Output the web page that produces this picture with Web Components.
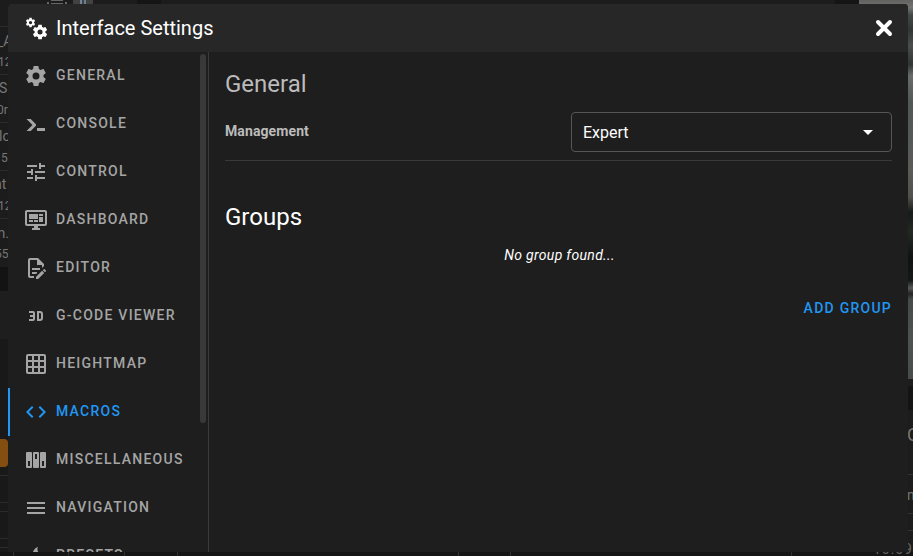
<!DOCTYPE html>
<html lang="en"><head><meta charset="utf-8"><title>Interface Settings</title>
<style>
html,body{margin:0;height:100%;overflow:hidden;background:#191919}
body{font-family:Roboto,sans-serif;color:#fff}
</style></head><body>
<app-stage>
<page-backdrop slot="back"></page-backdrop>
<settings-dialog heading="Interface Settings">
<settings-nav slot="nav">
<nav-item icon="cog">General</nav-item>
<nav-item icon="console">Console</nav-item>
<nav-item icon="tune">Control</nav-item>
<nav-item icon="dashboard">Dashboard</nav-item>
<nav-item icon="edit">Editor</nav-item>
<nav-item icon="threed">G-Code Viewer</nav-item>
<nav-item icon="grid">Heightmap</nav-item>
<nav-item icon="code" active>Macros</nav-item>
<nav-item icon="dip">Miscellaneous</nav-item>
<nav-item icon="menu">Navigation</nav-item>
<nav-item icon="fire">Presets</nav-item>
</settings-nav>
<macros-panel></macros-panel>
</settings-dialog>
</app-stage>
<script>
const ICONS={
cog:'<path d="M12,15.5A3.5,3.5 0 0,1 8.5,12A3.5,3.5 0 0,1 12,8.5A3.5,3.5 0 0,1 15.5,12A3.5,3.5 0 0,1 12,15.5M19.43,12.97C19.47,12.65 19.5,12.33 19.5,12C19.5,11.67 19.47,11.34 19.43,11L21.54,9.37C21.73,9.22 21.78,8.95 21.66,8.73L19.66,5.27C19.54,5.05 19.27,4.96 19.05,5.05L16.56,6.05C16.04,5.66 15.5,5.32 14.87,5.07L14.5,2.42C14.46,2.18 14.25,2 14,2H10C9.75,2 9.54,2.18 9.5,2.42L9.13,5.07C8.5,5.32 7.96,5.66 7.44,6.05L4.95,5.05C4.73,4.96 4.46,5.05 4.34,5.27L2.34,8.73C2.21,8.95 2.27,9.22 2.46,9.37L4.57,11C4.53,11.34 4.5,11.67 4.5,12C4.5,12.33 4.53,12.65 4.57,12.97L2.46,14.63C2.27,14.78 2.21,15.05 2.34,15.27L4.34,18.73C4.46,18.95 4.73,19.03 4.95,18.95L7.44,17.94C7.96,18.34 8.5,18.68 9.13,18.93L9.5,21.58C9.54,21.82 9.75,22 10,22H14C14.25,22 14.46,21.82 14.5,21.58L14.87,18.93C15.5,18.67 16.04,18.34 16.56,17.94L19.05,18.95C19.27,19.03 19.54,18.95 19.66,18.73L21.66,15.27C21.78,15.05 21.73,14.78 21.54,14.63L19.43,12.97Z"/>',
console:'<path d="M13,19V16H21V19H13M8.5,13L2.47,7H6.71L11.67,11.95C12.25,12.54 12.25,13.5 11.67,14.07L6.74,19H2.5L8.5,13Z"/>',
tune:'<path d="M3,17V19H9V17H3M3,5V7H13V5H3M13,21V19H21V17H13V15H11V21H13M7,9V11H3V13H7V15H9V9H7M21,13V11H11V13H21M15,9H17V7H21V5H17V3H15V9Z"/>',
dashboard:'<path d="M21,16V4H3V16H21M21,2A2,2 0 0,1 23,4V16A2,2 0 0,1 21,18H14V20H16V22H8V20H10V18H3C1.89,18 1,17.1 1,16V4C1,2.89 1.89,2 3,2H21M5,6H14V11H5V6M15,6H19V8H15V6M19,9V14H15V9H19M5,12H9V14H5V12M10,12H14V14H10V12Z"/>',
edit:'<path d="M8,12H16V14H8V12M10,20H6V4H13V9H18V12.1L20,10.1V8L14,2H6A2,2 0 0,0 4,4V20A2,2 0 0,0 6,22H10V20M8,18H12.1L13,17.1V16H8V18M20.2,13C20.3,13 20.5,13.1 20.6,13.2L21.9,14.5C22.1,14.7 22.1,15.1 21.9,15.3L20.9,16.3L18.8,14.2L19.8,13.2C19.9,13.1 20,13 20.2,13M20.2,16.9L14.1,23H12V20.9L18.1,14.8L20.2,16.9Z"/>',
threed:'<path d="M5,7H9A2,2 0 0,1 11,9V15A2,2 0 0,1 9,17H5V15H9V13H6V11H9V9H5V7M13,7H16A3,3 0 0,1 19,10V14A3,3 0 0,1 16,17H13V7M15,9V15H16A1,1 0 0,0 17,14V10A1,1 0 0,0 16,9H15Z"/>',
grid:'<path d="M10,4V8H14V4H10M16,4V8H20V4H16M16,10V14H20V10H16M16,16V20H20V16H16M14,20V16H10V20H14M8,20V16H4V20H8M8,14V10H4V14H8M8,8V4H4V8H8M10,14H14V10H10V14M4,2H20A2,2 0 0,1 22,4V20A2,2 0 0,1 20,22H4C2.92,22 2,21.1 2,20V4A2,2 0 0,1 4,2Z"/>',
code:'<path d="M14.6,16.6L19.2,12L14.6,7.4L16,6L22,12L16,18L14.6,16.6M9.4,16.6L4.8,12L9.4,7.4L8,6L2,12L8,18L9.4,16.6Z"/>',
dip:'<path fill-rule="evenodd" d="M3 4H7A1 1 0 0 1 8 5V19A1 1 0 0 1 7 20H3A1 1 0 0 1 2 19V5A1 1 0 0 1 3 4M4 13V18H6V13ZM10 4H14A1 1 0 0 1 15 5V19A1 1 0 0 1 14 20H10A1 1 0 0 1 9 19V5A1 1 0 0 1 10 4M11 6V11H13V6ZM17 4H21A1 1 0 0 1 22 5V19A1 1 0 0 1 21 20H17A1 1 0 0 1 16 19V5A1 1 0 0 1 17 4M18 13V18H20V13Z"/>',
menu:'<path d="M3,6H21V8H3V6M3,11H21V13H3V11M3,16H21V18H3V16Z"/>',
fire:'<path d="M17.66 11.2C17.43 10.9 17.15 10.64 16.89 10.38C16.22 9.78 15.46 9.35 14.82 8.72C13.33 7.26 13 4.85 13.95 3C13 3.23 12.17 3.75 11.46 4.32C8.87 6.4 7.85 10.07 9.07 13.22C7 13 6 11 6 10C4 14 6 21 12 21S20 15 17.66 11.2Z"/>',
close:'<path d="M6 6L18 18M18 6L6 18" fill="none" stroke="currentColor" stroke-width="4" stroke-linecap="round"/>',
caret:'<path d="M7 10L12 15L17 10Z"/>'
};
ICONS.cogs='<g transform="translate(.9 .9) scale(.47)">'+ICONS.cog+'</g><g transform="translate(7.4 7.4) scale(.72)">'+ICONS.cog+'</g>';
const define=(name,render)=>customElements.define(name,class extends HTMLElement{
constructor(){super();this.attachShadow({mode:'open'})}
connectedCallback(){this.shadowRoot.innerHTML=render(this)}
});
define('ui-icon',e=>`<style>:host{display:block;width:24px;height:24px;flex:none}svg{display:block}</style><svg width="24" height="24" viewBox="0 0 24 24" fill="currentColor">${ICONS[e.getAttribute('name')]}</svg>`);
define('app-stage',()=>`<style>:host{display:block;position:relative;width:913px;height:556px;overflow:hidden;box-sizing:border-box;padding:4px 5px 4px 8px}</style><slot name="back"></slot><slot></slot>`);
define('nav-item',e=>`<style>:host{display:flex;align-items:center;height:48px;box-sizing:border-box;padding-left:14px;gap:8px;border-left:2px solid transparent;color:#a5a5a5;font-size:14px;font-weight:500;letter-spacing:1.25px;text-transform:uppercase;line-height:20px;white-space:nowrap}
:host([active]){color:#2196f3;border-color:#2196f3}span{padding-bottom:2px}</style><ui-icon name="${e.getAttribute('icon')}"></ui-icon><span><slot></slot></span>`);
define('settings-nav',()=>`<style>:host{display:grid;grid-template-columns:1fr 6px;width:201px;box-sizing:border-box;padding-right:2px;border-right:1px solid #3a3a3a;height:500px;overflow:hidden}
.bar{margin-top:2px;height:369px;border-radius:3px;background:#393939}</style><div><slot></slot></div><div class="bar"></div>`);
define('settings-dialog',e=>`<style>:host{display:flex;flex-direction:column;position:relative;width:900px;height:548px;border-radius:4px 4px 0 0;overflow:hidden;background:#1e1e1e}
header{display:flex;align-items:center;gap:8px;height:48px;box-sizing:border-box;padding:0 12px 0 16px;background:#272727;font-size:20px;flex:none}
h1{font:inherit;margin:0;flex:1}main{display:flex;flex:1;min-height:0}</style><header><ui-icon name="cogs"></ui-icon><h1>${e.getAttribute('heading')}</h1><ui-icon name="close"></ui-icon></header><main><slot name="nav"></slot><slot></slot></main>`);
define('select-box',()=>`<style>:host{display:flex;align-items:center;justify-content:space-between;width:321px;height:40px;box-sizing:border-box;border:1px solid #565656;border-radius:4px;padding:0 11px;font-size:16px}</style><slot></slot><ui-icon name="caret"></ui-icon>`);
define('macros-panel',()=>`<style>:host{display:flex;flex-direction:column;flex:1;padding:16px 16px 0}
h2{margin:0;font-size:24px;font-weight:400;line-height:32px}.muted{color:#bbb}
.row{display:flex;align-items:center;justify-content:space-between;height:61px;box-sizing:border-box;border-bottom:1px solid #393939;padding-top:4px}
.row b{font-size:14px;color:#bbb;letter-spacing:.1px;padding-bottom:3px}
.groups{margin-top:40px}em{display:block;text-align:center;font-size:14px;line-height:20px;margin-top:12px;padding-left:2px;letter-spacing:.33px}
.add{align-self:flex-end;margin-top:33px;font-size:14px;font-weight:500;letter-spacing:1.25px;line-height:20px;color:#2196f3}</style>
<h2 class="muted">General</h2><div class="row"><b>Management</b><select-box>Expert</select-box></div><h2 class="groups">Groups</h2><em>No group found...</em><span class="add">ADD GROUP</span>`);
define('page-backdrop',()=>`<style>:host{position:absolute;inset:0;font-size:14px;color:#777}i,span{position:absolute;display:block;white-space:nowrap}
.l{height:20px;line-height:20px}.s{font-size:12px}</style>
<i style="left:0;top:0;width:8px;height:267px;background:#1c1c1c"></i><i style="left:0;top:267px;width:8px;height:24px;background:#131313"></i><i style="left:0;top:291px;width:8px;height:48px;background:#1e1e1e"></i>
${[26,74,122,170,218,475,502,511,538,547].map(y=>`<i style="left:0;top:${y}px;width:8px;height:1px;background:#2b2b2b"></i>`).join('')}
<i style="left:-20px;top:439px;width:28px;height:28px;border-radius:4px;background:#844e10"></i>
${[['_A',31,-3],['12',52,-2,1],['S',78,-1],['0r',100,-3,1],['lo',126,-1],['5',148,1,1],['nt',174,-6],['12',196,-2,1],['m.',223,-7],['55',244,-5,1]].map(([t,y,x,s])=>`<span class="l ${s?'s':''}" style="top:${y}px;left:${x}px">${t}</span>`).join('')}
<i style="left:0;top:0;width:858px;height:4px;background:#1c1c1c"></i><i style="left:137px;top:0;width:24px;height:4px;background:#151515"></i>
<i style="left:51px;top:0;width:12px;height:4px;border-top:1px solid #666;border-bottom:1px solid #666;box-sizing:border-box"></i><i style="left:47px;top:2px;width:2px;height:2px;background:#666"></i><i style="left:65px;top:2px;width:2px;height:2px;background:#666"></i>
<i style="left:73px;top:0;width:20px;height:4px;background:#424242"></i><i style="left:80px;top:0;width:2px;height:4px;background:#738496"></i><i style="left:84px;top:0;width:2px;height:4px;background:#68808e"></i>
<i style="left:835px;top:0;width:24px;height:4px;background:#151515"></i>
<i style="left:859px;top:0;width:54px;height:379px;background:linear-gradient(#626361 0,#737472 2%,#404844 4%,#303735 8%,#4a4e4d 12%,#303634 17%,#686b6a 20%,#505856 27%,#535957 36%,#5b5a57 45%,#51504d 52%,#151b17 56%,#222923 61%,#101411 68%,#141816 74%,#555957 76%,#252522 77.5%,#454b49 79%,#4c5350 90%,#454c4a)"></i>
<i style="left:908px;top:379px;width:5px;height:7px;background:#1e1e1e"></i><i style="left:908px;top:386px;width:5px;height:24px;background:#141414"></i><i style="left:908px;top:410px;width:5px;height:146px;background:#1c1c1c"></i>
${[474,513,530].map(y=>`<i style="left:908px;top:${y}px;width:5px;height:1px;background:#333"></i>`).join('')}
<span style="left:907px;top:424px;font-size:18px">C</span><span style="left:907px;top:487px;font-size:14px">n</span>
<i style="left:0;top:552px;width:913px;height:4px;background:#151515"></i>${[13,68,124,177,458,510,791].map(x=>`<i style="left:${x}px;top:552px;width:1px;height:4px;background:#303030"></i>`).join('')}
<span style="left:873px;top:541px;font-size:14px;color:#666;letter-spacing:1px">10:09</span>`);
</script></body></html>
